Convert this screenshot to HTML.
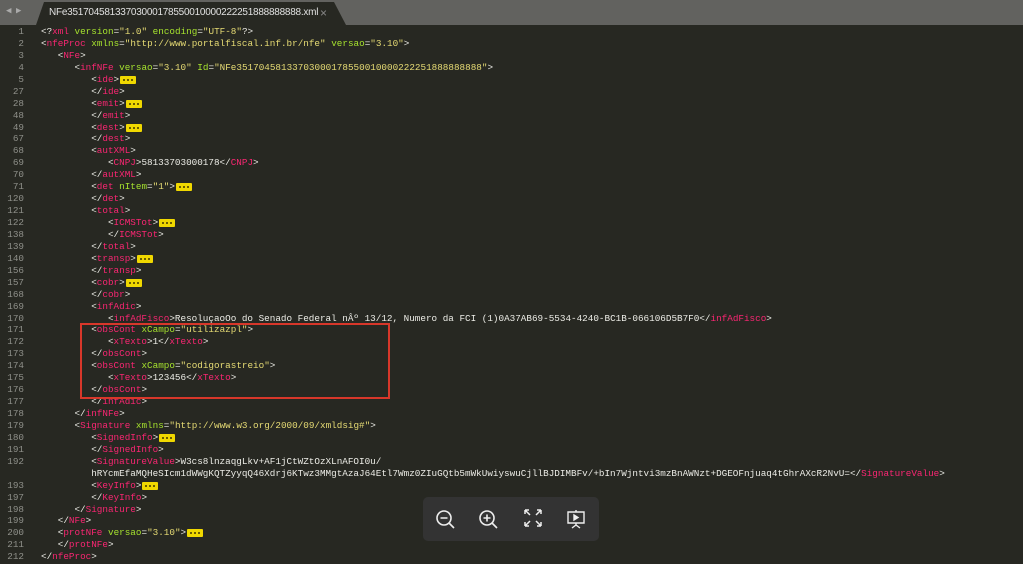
<!DOCTYPE html>
<html><head><meta charset="utf-8"><style>
body{margin:0;width:1023px;height:564px;overflow:hidden;background:#272822;position:relative;font-family:"Liberation Mono",monospace}
.bar{position:absolute;left:0;top:0;width:1023px;height:25px;background:#62625f}
.tab{position:absolute;left:36px;top:2px;width:310px;height:23px;background:#272822;clip-path:polygon(0 100%,8px 0,298px 0,310px 100%)}
.tab span{position:absolute;left:13px;top:5px;font:10px "Liberation Sans",sans-serif;color:#e0e0e0;letter-spacing:-0.25px;white-space:nowrap}
.tab b{position:absolute;left:284px;top:4px;font:12px "Liberation Sans",sans-serif;color:#888;font-weight:normal}
.arr{position:absolute;top:6px;color:#aaa;font-size:9px}
.code{position:absolute;left:0;top:26px;font-size:9.3px;line-height:11.95px;color:#ececE6}
.r{height:11.95px;position:relative}
.n{position:absolute;left:0;width:24px;text-align:right;color:#8f908a}
.c{position:absolute;left:41px;white-space:pre}
.t{color:#f92672}.a{color:#a6e22e}.s{color:#e6db74}
.f{display:inline-block;position:relative;top:1px;background:#f0d800;width:16px;height:8px;border-radius:1px;margin-left:1px;overflow:hidden;vertical-align:-1px}
.f:after{content:"";position:absolute;left:3px;top:3px;width:2px;height:2px;background:#6b5d00;box-shadow:4px 0 #6b5d00,8px 0 #6b5d00}
.box{position:absolute;left:80px;top:323px;width:306px;height:72px;border:2px solid #d8372a}
.tb{position:absolute;left:423px;top:497px;width:176px;height:44px;background:#333333;border-radius:5px}
.tb svg{position:absolute;top:12px}
</style></head><body>
<div class="bar"><span class="arr" style="left:6px">◀</span><span class="arr" style="left:16px">▶</span>
<div class="tab"><span>NFe35170458133703000178550010000222251888888888.xml</span><b>×</b></div></div>
<div class="code"><div class="r"><span class="n">1</span><span class="c">&lt;?<span class="t">xml</span> <span class="a">version</span>=<span class="s">"1.0"</span> <span class="a">encoding</span>=<span class="s">"UTF-8"</span>?&gt;</span></div>
<div class="r"><span class="n">2</span><span class="c">&lt;<span class="t">nfeProc</span> <span class="a">xmlns</span>=<span class="s">"http://www.portalfiscal.inf.br/nfe"</span> <span class="a">versao</span>=<span class="s">"3.10"</span>&gt;</span></div>
<div class="r"><span class="n">3</span><span class="c">   &lt;<span class="t">NFe</span>&gt;</span></div>
<div class="r"><span class="n">4</span><span class="c">      &lt;<span class="t">infNFe</span> <span class="a">versao</span>=<span class="s">"3.10"</span> <span class="a">Id</span>=<span class="s">"NFe35170458133703000178550010000222251888888888"</span>&gt;</span></div>
<div class="r"><span class="n">5</span><span class="c">         &lt;<span class="t">ide</span>&gt;<span class="f"></span></span></div>
<div class="r"><span class="n">27</span><span class="c">         &lt;/<span class="t">ide</span>&gt;</span></div>
<div class="r"><span class="n">28</span><span class="c">         &lt;<span class="t">emit</span>&gt;<span class="f"></span></span></div>
<div class="r"><span class="n">48</span><span class="c">         &lt;/<span class="t">emit</span>&gt;</span></div>
<div class="r"><span class="n">49</span><span class="c">         &lt;<span class="t">dest</span>&gt;<span class="f"></span></span></div>
<div class="r"><span class="n">67</span><span class="c">         &lt;/<span class="t">dest</span>&gt;</span></div>
<div class="r"><span class="n">68</span><span class="c">         &lt;<span class="t">autXML</span>&gt;</span></div>
<div class="r"><span class="n">69</span><span class="c">            &lt;<span class="t">CNPJ</span>&gt;58133703000178&lt;/<span class="t">CNPJ</span>&gt;</span></div>
<div class="r"><span class="n">70</span><span class="c">         &lt;/<span class="t">autXML</span>&gt;</span></div>
<div class="r"><span class="n">71</span><span class="c">         &lt;<span class="t">det</span> <span class="a">nItem</span>=<span class="s">"1"</span>&gt;<span class="f"></span></span></div>
<div class="r"><span class="n">120</span><span class="c">         &lt;/<span class="t">det</span>&gt;</span></div>
<div class="r"><span class="n">121</span><span class="c">         &lt;<span class="t">total</span>&gt;</span></div>
<div class="r"><span class="n">122</span><span class="c">            &lt;<span class="t">ICMSTot</span>&gt;<span class="f"></span></span></div>
<div class="r"><span class="n">138</span><span class="c">            &lt;/<span class="t">ICMSTot</span>&gt;</span></div>
<div class="r"><span class="n">139</span><span class="c">         &lt;/<span class="t">total</span>&gt;</span></div>
<div class="r"><span class="n">140</span><span class="c">         &lt;<span class="t">transp</span>&gt;<span class="f"></span></span></div>
<div class="r"><span class="n">156</span><span class="c">         &lt;/<span class="t">transp</span>&gt;</span></div>
<div class="r"><span class="n">157</span><span class="c">         &lt;<span class="t">cobr</span>&gt;<span class="f"></span></span></div>
<div class="r"><span class="n">168</span><span class="c">         &lt;/<span class="t">cobr</span>&gt;</span></div>
<div class="r"><span class="n">169</span><span class="c">         &lt;<span class="t">infAdic</span>&gt;</span></div>
<div class="r"><span class="n">170</span><span class="c">            &lt;<span class="t">infAdFisco</span>&gt;ResoluçaoOo do Senado Federal nÂº 13/12, Numero da FCI (1)0A37AB69-5534-4240-BC1B-066106D5B7F0&lt;/<span class="t">infAdFisco</span>&gt;</span></div>
<div class="r"><span class="n">171</span><span class="c">         &lt;<span class="t">obsCont</span> <span class="a">xCampo</span>=<span class="s">"utilizazpl"</span>&gt;</span></div>
<div class="r"><span class="n">172</span><span class="c">            &lt;<span class="t">xTexto</span>&gt;1&lt;/<span class="t">xTexto</span>&gt;</span></div>
<div class="r"><span class="n">173</span><span class="c">         &lt;/<span class="t">obsCont</span>&gt;</span></div>
<div class="r"><span class="n">174</span><span class="c">         &lt;<span class="t">obsCont</span> <span class="a">xCampo</span>=<span class="s">"codigorastreio"</span>&gt;</span></div>
<div class="r"><span class="n">175</span><span class="c">            &lt;<span class="t">xTexto</span>&gt;123456&lt;/<span class="t">xTexto</span>&gt;</span></div>
<div class="r"><span class="n">176</span><span class="c">         &lt;/<span class="t">obsCont</span>&gt;</span></div>
<div class="r"><span class="n">177</span><span class="c">         &lt;/<span class="t">infAdic</span>&gt;</span></div>
<div class="r"><span class="n">178</span><span class="c">      &lt;/<span class="t">infNFe</span>&gt;</span></div>
<div class="r"><span class="n">179</span><span class="c">      &lt;<span class="t">Signature</span> <span class="a">xmlns</span>=<span class="s">"http://www.w3.org/2000/09/xmldsig#"</span>&gt;</span></div>
<div class="r"><span class="n">180</span><span class="c">         &lt;<span class="t">SignedInfo</span>&gt;<span class="f"></span></span></div>
<div class="r"><span class="n">191</span><span class="c">         &lt;/<span class="t">SignedInfo</span>&gt;</span></div>
<div class="r"><span class="n">192</span><span class="c">         &lt;<span class="t">SignatureValue</span>&gt;W3cs8lnzaqgLkv+AF1jCtWZtOzXLnAFOI0u/</span></div>
<div class="r"><span class="c">         hRYcmEfaMQHeSIcm1dWWgKQTZyyqQ46Xdrj6KTwz3MMgtAzaJ64Etl7Wmz0ZIuGQtb5mWkUwiyswuCjllBJDIMBFv/+bIn7Wjntvi3mzBnAWNzt+DGEOFnjuaq4tGhrAXcR2NvU=&lt;/<span class="t">SignatureValue</span>&gt;</span></div>
<div class="r"><span class="n">193</span><span class="c">         &lt;<span class="t">KeyInfo</span>&gt;<span class="f"></span></span></div>
<div class="r"><span class="n">197</span><span class="c">         &lt;/<span class="t">KeyInfo</span>&gt;</span></div>
<div class="r"><span class="n">198</span><span class="c">      &lt;/<span class="t">Signature</span>&gt;</span></div>
<div class="r"><span class="n">199</span><span class="c">   &lt;/<span class="t">NFe</span>&gt;</span></div>
<div class="r"><span class="n">200</span><span class="c">   &lt;<span class="t">protNFe</span> <span class="a">versao</span>=<span class="s">"3.10"</span>&gt;<span class="f"></span></span></div>
<div class="r"><span class="n">211</span><span class="c">   &lt;/<span class="t">protNFe</span>&gt;</span></div>
<div class="r"><span class="n">212</span><span class="c">&lt;/<span class="t">nfeProc</span>&gt;</span></div></div>
<div class="box"></div>
<div class="tb">
<svg style="left:12px" width="22" height="22" viewBox="0 0 22 22" fill="none" stroke="#eee" stroke-width="1.6"><circle cx="9" cy="9" r="7"/><path d="M5.5 9h7M14 14l5 5"/></svg>
<svg style="left:55px" width="22" height="22" viewBox="0 0 22 22" fill="none" stroke="#eee" stroke-width="1.6"><circle cx="9" cy="9" r="7"/><path d="M5.5 9h7M9 5.5v7M14 14l5 5"/></svg>
<svg style="left:101px" width="18" height="18" viewBox="0 0 18 18" fill="none" stroke="#eee" stroke-width="1.5"><path d="M1 1l5 5M1 1h4M1 1v4M17 1l-5 5M17 1h-4M17 1v4M1 17l5-5M1 17h4M1 17v-4M17 17l-5-5M17 17h-4M17 17v-4"/></svg>
<svg style="left:143px" width="20" height="20" viewBox="0 0 20 20" fill="none" stroke="#eee" stroke-width="1.4"><path d="M10 1v2M2 3h16v11H2zM10 14v2M6 19l4-3 4 3"/><path d="M8 6v5l4-2.5z" fill="#eee"/></svg>
</div>
</body></html>
